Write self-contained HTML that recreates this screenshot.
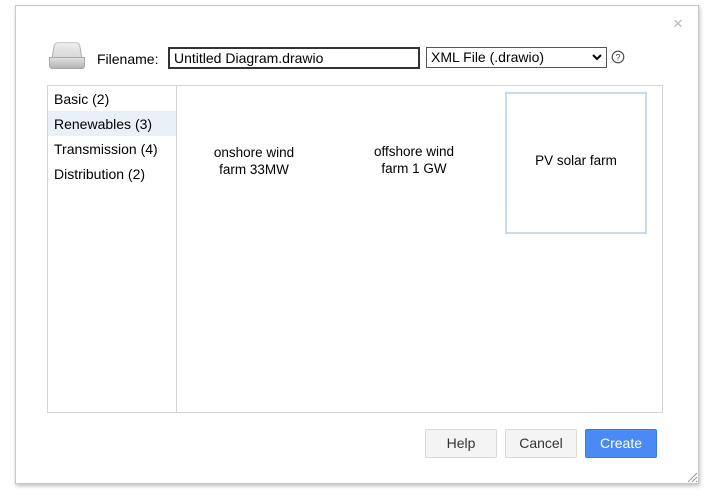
<!DOCTYPE html>
<html><head><meta charset="utf-8"><style>
*{box-sizing:border-box;margin:0;padding:0}
body{width:709px;height:497px;background:#fff;font-family:"Liberation Sans",Arial,sans-serif;font-size:14px;color:#000;position:relative;overflow:hidden}
.dlg{position:absolute;left:15px;top:5px;width:684px;height:479px;border:1px solid #c8c8c8;box-shadow:1px 2px 4px rgba(0,0,0,.25);background:#fff}
.abs{position:absolute}
.btn{position:absolute;top:429px;height:29px;border:1px solid #dadada;background:#f4f4f4;border-radius:2px;font-size:14px;color:#333;text-align:center;line-height:27px}
</style></head><body>
<div class="dlg"></div>
<div class="abs" style="left:673px;top:14px;font-size:17px;color:#b8b8b8">×</div>
<div class="abs" style="left:49px;top:41px;width:36px;height:28px">
<div class="abs" style="left:4px;top:0;width:28px;height:18px;background:linear-gradient(#eee,#d8d8d8);border:1px solid #b0b0b0;border-radius:4px 4px 0 0;transform:perspective(30px) rotateX(20deg)"></div>
<div class="abs" style="left:0;top:16px;width:36px;height:12px;background:linear-gradient(#e0e0e0,#b4b4b4);border:1px solid #a8a8a8;border-radius:0 0 3px 3px"></div>
</div>
<div class="abs" style="left:97px;top:51px">Filename:</div>
<div class="abs" style="left:168px;top:47px;width:252px;height:22px;border:2px solid #333;padding-left:4px;line-height:18px">Untitled Diagram.drawio</div>
<div class="abs" style="left:426px;top:47px;width:181px;height:21px;border:1px solid #555;padding-left:4px;line-height:19px">XML File (.drawio)<svg class="abs" style="right:4px;top:6px" width="10" height="7"><path d="M1 1L5 5L9 1" stroke="#000" stroke-width="2" fill="none"/></svg></div>
<svg class="abs" style="left:611px;top:50px" width="14" height="14"><circle cx="7" cy="7" r="5.8" fill="none" stroke="#444" stroke-width="1.1"/><text x="7" y="10.5" font-size="9" text-anchor="middle" fill="#444" font-family="Liberation Sans">?</text></svg>
<div class="abs" style="left:47px;top:85px;width:616px;height:328px;border:1px solid #d4d4d4"></div>
<div class="abs" style="left:176px;top:86px;width:1px;height:326px;background:#d4d4d4"></div>
<div class="abs" style="left:48px;top:111px;width:128px;height:25px;background:#eaf0f8"></div>
<div class="abs" style="left:54px;top:91px">Basic (2)</div>
<div class="abs" style="left:54px;top:116px">Renewables (3)</div>
<div class="abs" style="left:54px;top:141px">Transmission (4)</div>
<div class="abs" style="left:54px;top:166px">Distribution (2)</div>
<div class="abs" style="left:194px;top:144px;width:120px;text-align:center;font-size:13.5px;line-height:17px">onshore wind<br>farm 33MW</div>
<div class="abs" style="left:354px;top:143px;width:120px;text-align:center;font-size:13.5px;line-height:17px">offshore wind<br>farm 1 GW</div>
<div class="abs" style="left:505px;top:92px;width:142px;height:142px;border:2px solid #c9dbe8"></div>
<div class="abs" style="left:505px;top:153px;width:142px;text-align:center;font-size:13.5px">PV solar farm</div>
<div class="btn" style="left:425px;width:72px">Help</div>
<div class="btn" style="left:505px;width:72px">Cancel</div>
<div class="btn" style="left:585px;width:72px;background:#4a8af4;border-color:#3b7be0;color:#fff">Create</div>
<svg class="abs" style="left:686px;top:471px" width="12" height="12"><path d="M2 11L11 2M6 11L11 6M10 11L11 10" stroke="#999" stroke-width="1"/></svg>
</body></html>
